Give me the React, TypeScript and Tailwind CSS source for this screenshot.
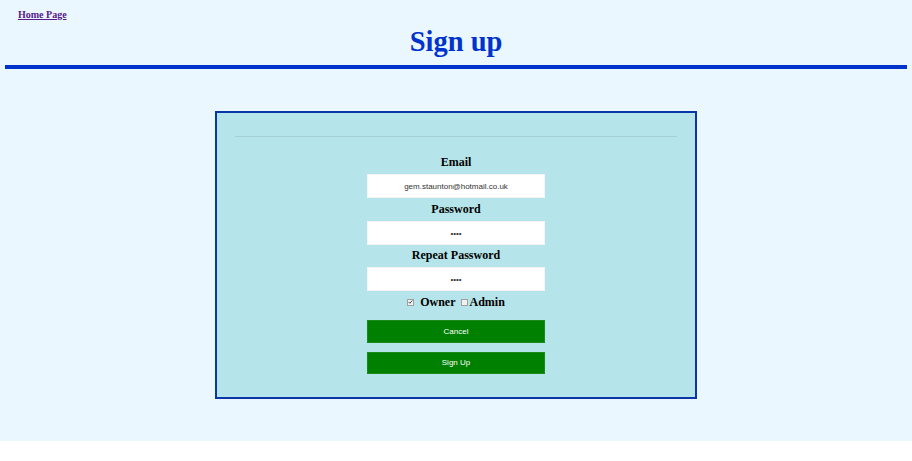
import React from "react";

const serif = { fontFamily: '"Liberation Serif", "Times New Roman", serif' };
const sans = { fontFamily: '"Liberation Sans", Arial, sans-serif' };

function Field({ label, value, mt }: { label: string; value: string; mt: string }) {
  return (
    <>
      <label className={`block h-[16px] text-[12px] leading-[16px] font-bold text-black ${mt}`}>{label}</label>
      <input
        readOnly
        value={value}
        className="mx-auto mt-[4px] block h-[24px] w-[178px] border border-[#f4f4f4] bg-white text-center text-[8px] text-[#333] outline-none"
        style={sans}
      />
    </>
  );
}

function Box({ checked }: { checked?: boolean }) {
  return (
    <span className="inline-flex h-[7px] w-[7px] items-center justify-center border border-[#a0a0a0] bg-[#f0f0f0]">
      {checked && (
        <svg viewBox="0 0 8 8" className="h-[6px] w-[6px]">
          <path d="M1 4 L3 6 L7 1.5" fill="none" stroke="#333" strokeWidth="1.4" />
        </svg>
      )}
    </span>
  );
}

export default function App() {
  return (
    <div className="h-[441px] bg-[#ebf7ff] pt-[9px]" style={serif}>
      <a href="#" className="ml-[18px] block h-[12px] text-[10px] leading-[12px] font-bold text-[#551a8b] underline">
        Home Page
      </a>
      <h1 className="mt-[5px] text-center text-[28.5px] leading-[32px] font-bold text-[#0033cc]">Sign up</h1>
      <div className="mx-[5px] mt-[7px] h-[4px] bg-[#0033cc]" />

      <form className="mx-auto mt-[42px] h-[288px] w-[482px] border-2 border-[#0a36a8] bg-[#b5e5ea] px-[18px] pt-[23px] text-center">
        <hr className="border-t border-[#a6cfd6]" />
        <Field label="Email" value="gem.staunton@hotmail.co.uk" mt="mt-[17px]" />
        <Field label="Password" value="••••" mt="mt-[3px]" />
        <Field label="Repeat Password" value="••••" mt="mt-[2px]" />
        <div className="mt-[3px] flex h-[16px] items-center justify-center text-[12px] leading-[16px] font-bold text-black">
          <Box checked />
          <span className="ml-[6px]">Owner</span>
          <span className="ml-[6px]"><Box /></span>
          <span className="ml-[1px]">Admin</span>
        </div>
        <button
          type="button"
          className="mx-auto mt-[10px] block h-[23px] w-[178px] border border-[#1a8a1a] bg-[#008000] text-[8px] text-white"
          style={sans}
        >
          Cancel
        </button>
        <button
          type="button"
          className="mx-auto mt-[9px] block h-[22px] w-[178px] border border-[#1a8a1a] bg-[#008000] text-[8px] text-white"
          style={sans}
        >
          Sign Up
        </button>
      </form>
    </div>
  );
}
